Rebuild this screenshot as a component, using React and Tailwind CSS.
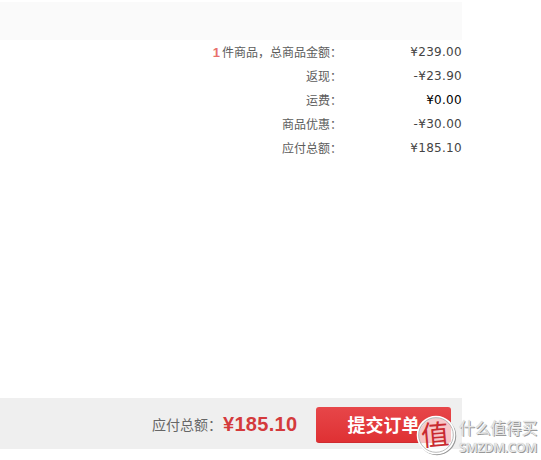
import React from 'react'

const rows = [
  { count: 1, label: '件商品，总商品金额：', value: '¥239.00' },
  { label: '返现：', value: '-¥23.90' },
  { label: '运费：', value: '¥0.00', dark: true },
  { label: '商品优惠：', value: '-¥30.00' },
  { label: '应付总额：', value: '¥185.10' },
]

const SummaryRow = ({ count, label, value, dark }) => (
  <div className="flex h-6 items-center justify-end text-xs leading-6">
    <div className="text-[#5c5c5c]">
      {count && <span className="mr-[2px] font-['Liberation_Sans'] text-[13px] font-bold text-[#e8706c]">{count}</span>}
      {label}
    </div>
    <div
      className={`w-[120px] text-right font-['DejaVu_Sans',sans-serif] tracking-[0.3px] ${dark ? 'text-black' : 'text-[#444]'}`}
    >
      {value}
    </div>
  </div>
)

const Watermark = () => (
  <div className="absolute top-[415px] left-[416px] flex">
    <svg width="41" height="41" viewBox="0 0 41 41" className="overflow-visible">
      <circle cx="21" cy="21" r="18.5" fill="none" stroke="#999" strokeWidth="1.5" />
      <circle cx="20" cy="20" r="18.5" fill="#fff" fillOpacity="0.72" stroke="#fff" strokeWidth="1.6" />
      <circle cx="20" cy="20" r="17.3" fill="none" stroke="#aaa" strokeWidth="0.8" />
      <text
        x="19"
        y="30"
        textAnchor="middle"
        fontSize="28"
        fontFamily="Noto Sans CJK SC, sans-serif"
        fill="#c92a30"
        transform="rotate(-5 20 20)"
      >
        值
      </text>
    </svg>
    <div className="ml-[2px] pt-[3px] whitespace-nowrap text-[#e6e6e6] [text-shadow:1px_1px_0px_#999,0_0_1px_#bbb]">
      <div className="text-[15.7px] leading-[20px]">什么值得买</div>
      <div className="mt-px font-['Open_Sans',sans-serif] text-[13px] leading-[16px] font-semibold tracking-[-0.5px]">
        SMZDM.COM
      </div>
    </div>
  </div>
)

const App = () => {
  return (
    <div className="relative h-[460px] w-[541px] overflow-hidden bg-white pt-[2px] font-['Noto_Sans_CJK_SC',sans-serif]">
      <div className="w-[462px]">
        <div className="h-[38px] bg-[#fafafa]" />
        <div className="h-[358px]">
          {rows.map((row) => (
            <SummaryRow key={row.label} {...row} />
          ))}
        </div>
        <div className="flex h-[51px] items-center justify-end bg-[#efefef] pr-[11px]">
          <span className="text-sm text-[#666]">应付总额：</span>
          <span className="w-[94px] pl-px font-['Liberation_Sans',sans-serif] text-xl font-bold tracking-[0.3px] text-[#d43a3c]">
            ¥185.10
          </span>
          <button className="mt-[2px] h-9 w-[135px] rounded-[3px] border-b border-[#cf2b2f] bg-linear-to-b from-[#e74649] to-[#df3033] text-lg leading-[34px] font-bold text-white">
            提交订单
          </button>
        </div>
      </div>
      <Watermark />
    </div>
  )
}

export default App
